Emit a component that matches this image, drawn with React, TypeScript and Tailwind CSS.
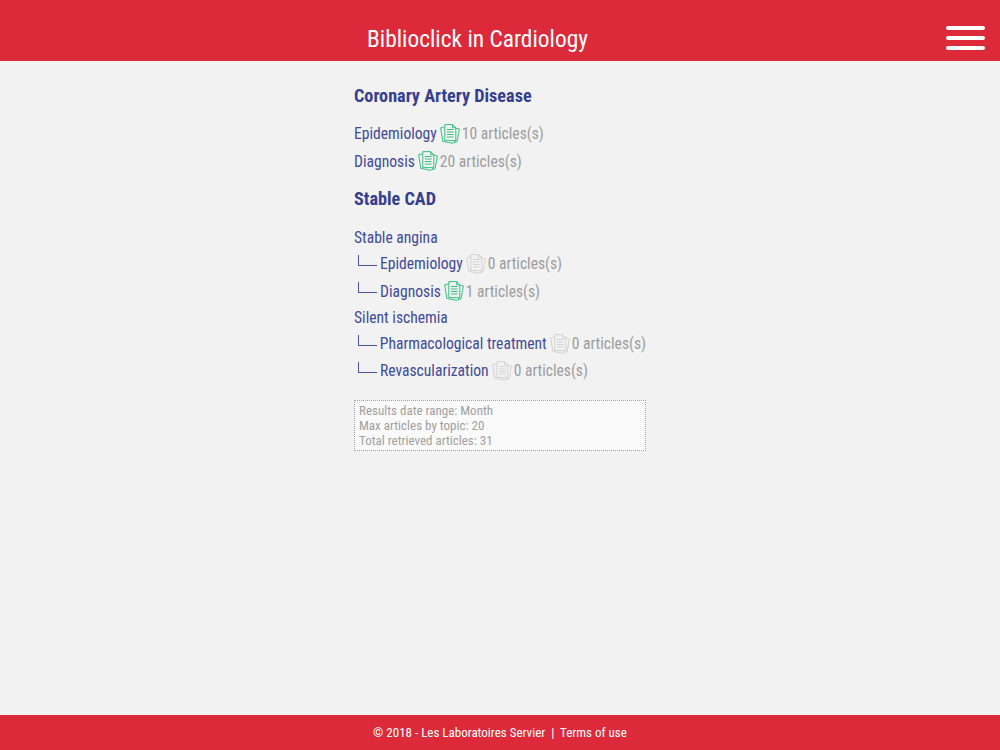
const font = { fontFamily: '"Roboto", sans-serif', fontStretch: "75%" };

function DocsIcon({ active }: { active: boolean }) {
  const stroke = active ? "#35c27f" : "#d2d2d2";
  return (
    <svg width="20" height="20" viewBox="0 0 20 20" fill="none" stroke={stroke} strokeWidth="1" className="mr-[2px] mb-[2px] ml-[3px] shrink-0">
      <path d="M5 2.8 L0.6 3.8 L2.8 17.4 L13 19.4 L15.6 16.5" />
      <path d="M15.5 4 L19.4 5 L17 17.8 L14 18.6" />
      <path d="M4.8 0.6 H12.6 L15.8 3.8 V16.6 H4.8 Z" fill="#f2f2f2" />
      <path d="M12.6 0.6 V3.8 H15.8" />
      <path d="M7 5.5 H13.6 M7 8 H13.6 M7 10.5 H13.6 M7 13 H13.6" />
    </svg>
  );
}

function TopicRow({ label, count, child }: { label: string; count: number; child?: boolean }) {
  return (
    <div className={child ? "flex h-[27.3px] items-center whitespace-nowrap" : "flex h-[27.5px] items-center whitespace-nowrap"}>
      {child ? (
        <span className="mr-[3px] ml-[4px] mb-[9px] h-[11px] w-[19px] border-b-[1.5px] border-l-[1.5px] border-[#4a52a0]" />
      ) : null}
      <span className="text-[#3f4a9a]">{label}</span>
      <DocsIcon active={count > 0} />
      <span className="text-[#9c9c9c]">{count} articles(s)</span>
    </div>
  );
}

export default function App() {
  return (
    <div style={font} className="flex min-h-[750px] flex-col bg-[#f2f2f2] text-[15.6px]">
      <header className="flex h-[61px] items-center bg-[#dc2a3a] text-white">
        <h1 className="ml-[367px] mt-[19px] text-[23.4px]">Biblioclick in Cardiology</h1>
        <div className="ml-auto mr-[15px] mt-[15px] flex w-[39px] flex-col gap-[6px]">
          <span className="h-[4px] rounded-full bg-white" />
          <span className="h-[4px] rounded-full bg-white" />
          <span className="h-[4px] rounded-full bg-white" />
        </div>
      </header>
      <main className="mx-auto w-[292px] flex-1 pt-[20.5px]">
        <h2 className="mb-[11.5px] text-[18.2px] leading-7 font-bold text-[#363f8f]">Coronary Artery Disease</h2>
        <TopicRow label="Epidemiology" count={10} />
        <TopicRow label="Diagnosis" count={20} />
        <h2 className="mt-[9px] mb-[13.5px] text-[18.2px] leading-7 font-bold text-[#363f8f]">Stable CAD</h2>
        <div className="flex h-[25px] items-center text-[#3f4a9a]">Stable angina</div>
        <TopicRow label="Epidemiology" count={0} child />
        <TopicRow label="Diagnosis" count={1} child />
        <div className="flex h-[25px] items-center text-[#3f4a9a]">Silent ischemia</div>
        <TopicRow label="Pharmacological treatment" count={0} child />
        <TopicRow label="Revascularization" count={0} child />
        <div className="mt-[14.8px] h-[51px] border border-dotted border-[#a0a0a0] bg-[#fafafa] px-[4px] py-[2px] text-[13px] leading-[15px] text-[#a0a0a0]">
          <div>Results date range: Month</div>
          <div>Max articles by topic: 20</div>
          <div>Total retrieved articles: 31</div>
        </div>
      </main>
      <footer className="flex h-[35px] items-center justify-center bg-[#dc2a3a] text-[13px] text-white">
        © 2018 - Les Laboratoires Servier&nbsp; |&nbsp; Terms of use
      </footer>
    </div>
  );
}
